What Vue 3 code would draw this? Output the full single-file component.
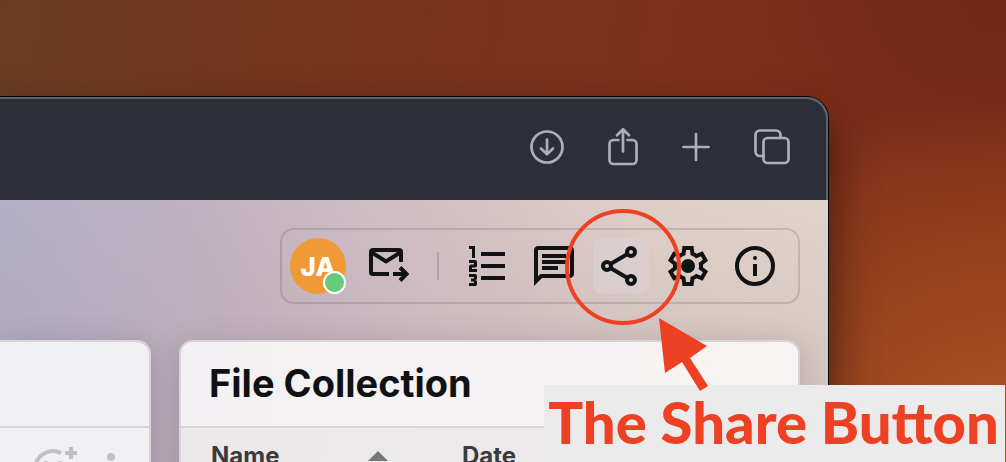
<script setup>
const columns = [
  { key: 'name', label: 'Name', sorted: true },
  { key: 'date', label: 'Date', sorted: false },
]
</script>

<template>
  <main class="desktop">
    <section class="window">
      <header class="titlebar">
        <button type="button" class="chrome" aria-label="Downloads">
          <svg width="34" height="40" viewBox="0 0 34 40">
            <circle cx="17" cy="20" r="15.5" />
            <path d="M17 12.5V27M11 21.5L17 27.3L23 21.5" />
          </svg>
        </button>
        <button type="button" class="chrome" aria-label="Share page">
          <svg width="30" height="40" viewBox="0 0 30 40">
            <path d="M10.500 13H5.500A4 4 0 0 0 1.500 17V33A4 4 0 0 0 5.500 37H24.500A4 4 0 0 0 28.500 33V17A4 4 0 0 0 24.500 13H19.500" />
            <path d="M15 24.500V2.500M9 8.300L15 2.300L21 8.300" />
          </svg>
        </button>
        <button type="button" class="chrome" aria-label="New tab">
          <svg width="28" height="40" viewBox="0 0 28 40">
            <path d="M14 7V33M1.500 20H26.500" />
          </svg>
        </button>
        <button type="button" class="chrome" aria-label="Tab overview">
          <svg width="36" height="40" viewBox="0 0 36 40">
            <rect x="9.500" y="11" width="25" height="25" rx="4" />
            <path d="M9.500 29H6A4.500 4.500 0 0 1 1.500 24.500V8A4.500 4.500 0 0 1 6 3.500H22A4.500 4.500 0 0 1 26.500 8V11" />
          </svg>
        </button>
      </header>

      <div class="content">
        <nav class="toolbar" aria-label="Board tools">
          <button type="button" class="avatar" aria-label="Account JA">
            JA<span class="presence"></span>
          </button>
          <button type="button" class="tool mail" aria-label="Invite">
            <svg width="56" height="56" viewBox="0 0 56 56" fill="none" stroke="currentColor" stroke-width="4">
              <path d="M28 36H12A2 2 0 0 1 10 34V14A2 2 0 0 1 12 12H38A2 2 0 0 1 40 14V24" />
              <path d="M10 14L25 23.500L40 14" />
              <path d="M32 36H45M39 29.500L45.500 36L39 42.500" />
            </svg>
          </button>
          <span class="divider"></span>
          <button type="button" class="tool" aria-label="Numbered list">
            <svg width="48" height="48" viewBox="0 0 24 24" fill="currentColor">
              <path d="M3 22v-1.500h2.500v-.75H4v-1.500h1.500v-.75H3V16h3q.425 0 .713.288T7 17v1q0 .425-.288.713T6 19q.425 0 .713.288T7 20v1q0 .425-.288.713T6 22H3Zm0-7v-2.750q0-.425.288-.713T4 11.250h1.500v-.75H3V9h3q.425 0 .713.288T7 10v1.750q0 .425-.288.713T6 12.750H4.500v.75H7V15H3Zm1.500-7V3.500H3V2h3v6H4.500ZM9 19v-2h12v2H9Zm0-6v-2h12v2H9Zm0-6V5h12v2H9Z" />
            </svg>
          </button>
          <button type="button" class="tool" aria-label="Comments">
            <svg width="48" height="48" viewBox="0 0 24 24" fill="currentColor">
              <path d="M4 4h16v12H5.170L4 17.170V4m0-2c-1.100 0-2 .9-2 2v18l4-4h14c1.100 0 2-.9 2-2V4c0-1.100-.9-2-2-2H4zm2 10h8v2H6v-2zm0-3h12v2H6V9zm0-3h12v2H6V6z" />
            </svg>
          </button>
          <button type="button" class="tool active" aria-label="Share">
            <svg width="56" height="56" viewBox="0 0 56 56" fill="none" stroke="currentColor" stroke-width="4">
              <circle cx="14" cy="28" r="4" />
              <circle cx="38" cy="14" r="4" />
              <circle cx="38" cy="42" r="4" />
              <path d="M17.500 26L34.500 16M17.500 30L34.500 40" />
            </svg>
          </button>
          <button type="button" class="tool" aria-label="Settings">
            <svg width="48" height="48" viewBox="0 0 24 24" fill="currentColor">
              <path fill-rule="evenodd" d="m9.250 22l-.4-3.200q-.325-.125-.612-.3t-.563-.375L4.700 19.375l-2.750-4.750l2.575-1.950Q4.500 12.500 4.500 12.338v-.675q0-.163.025-.338L1.950 9.375l2.750-4.750l2.975 1.250q.275-.2.575-.375t.6-.3l.4-3.200h5.500l.4 3.200q.325.125.613.3t.562.375l2.975-1.250l2.750 4.750l-2.575 1.950q.025.175.025.338v.674q0 .163-.05.338l2.575 1.950l-2.750 4.750l-2.950-1.250q-.275.2-.575.375t-.6.3l-.4 3.200h-5.500ZM11 20h1.975l.35-2.650q.775-.2 1.438-.588t1.212-.937l2.475 1.025l.975-1.700l-2.150-1.625q.125-.35.175-.737T17.500 12q0-.4-.05-.787t-.175-.738l2.150-1.625l-.975-1.700l-2.475 1.050q-.55-.575-1.212-.963t-1.438-.587L13 4h-1.975l-.35 2.650q-.775.2-1.437.588t-1.213.937L5.550 7.150l-.975 1.700l2.150 1.600q-.125.375-.175.75t-.05.8q0 .4.05.775t.175.75l-2.150 1.625l.975 1.700l2.475-1.050q.55.575 1.213.963t1.437.587L11 20Z" />
              <circle cx="12" cy="12" r="3.500" />
            </svg>
          </button>
          <button type="button" class="tool" aria-label="Info">
            <svg width="48" height="48" viewBox="0 0 24 24" fill="currentColor">
              <path d="M11 17h2v-6h-2v6z" />
              <circle cx="12" cy="8" r="1" />
              <circle cx="12" cy="12" r="9" fill="none" stroke="currentColor" stroke-width="2" />
            </svg>
          </button>
        </nav>

        <div class="cards">
          <article class="card side">
            <header class="card-head"></header>
            <div class="actions">
              <button type="button" class="tool" aria-label="Add reaction">
                <svg width="48" height="48" viewBox="0 0 24 24" fill="currentColor">
                  <path d="M16 3.950A9 9 0 1 0 20.500 9" fill="none" stroke="currentColor" stroke-width="2" />
                  <circle cx="8.500" cy="9.500" r="1.500" />
                  <circle cx="15.500" cy="9.500" r="1.500" />
                  <path d="M12 17.500c2.330 0 4.310-1.460 5.110-3.500H6.890c.8 2.040 2.780 3.500 5.110 3.500z" />
                  <path d="M20 1h2v2h2v2h-2v2h-2V5h-2V3h2z" />
                </svg>
              </button>
              <button type="button" class="tool" aria-label="More">
                <svg width="48" height="48" viewBox="0 0 24 24" fill="currentColor">
                  <circle cx="12" cy="6" r="2" />
                  <circle cx="12" cy="12" r="2" />
                  <circle cx="12" cy="18" r="2" />
                </svg>
              </button>
            </div>
          </article>

          <article class="card files">
            <header class="card-head"><h1>File Collection</h1></header>
            <table>
              <thead>
                <tr>
                  <th v-for="column in columns" :key="column.key" scope="col">
                    <span class="label">
                      {{ column.label }}
                      <svg v-if="column.sorted" width="20" height="10" viewBox="0 0 20 10"><path d="M0 10L10 0L20 10Z" fill="currentColor" /></svg>
                    </span>
                  </th>
                </tr>
              </thead>
            </table>
          </article>
        </div>
      </div>
    </section>

    <p class="caption">The Share Button</p>
    <svg class="pointer" width="152" height="190" viewBox="0 0 152 190" aria-hidden="true">
      <circle cx="63" cy="62" r="56" fill="none" stroke="#ee4023" stroke-width="4" />
      <path d="M99 113L147 141L130 153L148 181L140 186L122 157L105 168Z" fill="#ee4023" />
    </svg>
  </main>
</template>

<style>
body {
  margin: 0;
}
</style>

<style scoped>
* {
  box-sizing: border-box;
}

.desktop {
  position: relative;
  display: flex;
  height: 100vh;
  padding: 96px 177px 0 0;
  overflow: hidden;
  font-family: Inter, "Liberation Sans", sans-serif;
  background:
    radial-gradient(ellipse 420px 360px at 100% 100%, #b05a26 0%, #a85223cc 30%, #a8522300 100%),
    radial-gradient(ellipse 300px 240px at 100% 0%, #6c2417cc 0%, #6c241700 100%),
    linear-gradient(100deg, #6b3c24 0%, #74371c 25%, #80301a 65%, #863119 100%);
}

.window {
  position: relative;
  display: flex;
  flex: 1;
  flex-direction: column;
  min-width: 0;
  border: solid #08080a;
  border-width: 1px 1px 0 0;
  border-radius: 0 22px 0 0;
  box-shadow: 0 24px 44px 2px rgba(20, 8, 4, 0.6);
}

.titlebar {
  display: flex;
  flex: none;
  align-items: center;
  justify-content: flex-end;
  gap: 44px;
  height: 103px;
  padding: 0 38px 3px;
  background: #2c2f38;
  border-radius: 0 21px 0 0;
  box-shadow: inset -1px 1px 0 1px #5d616a;
  clip-path: inset(0);
}

button {
  padding: 0;
  border: 0;
  background: none;
  font: inherit;
  cursor: pointer;
}

button svg {
  display: block;
}

.chrome {
  color: #abaebb;
}

.chrome svg {
  fill: none;
  stroke: currentColor;
  stroke-width: 2.7;
  stroke-linecap: round;
  stroke-linejoin: round;
}

.content {
  display: flex;
  flex: 1;
  flex-direction: column;
  gap: 36px;
  padding-top: 28px;
  background:
    linear-gradient(180deg, #aa9ca800 0%, #a698a566 100%),
    linear-gradient(98deg, #b1aec5 0%, #c0b2c0 23%, #d3c0c4 50%, #dfcfc7 76%, #e2d5ca 100%);
}

.toolbar {
  display: flex;
  align-self: flex-end;
  align-items: center;
  gap: 11px;
  margin-right: 28px;
  padding: 8px 15px 8px 8px;
  border: 2px solid rgba(90, 70, 80, 0.2);
  border-radius: 14px;
}

.avatar {
  position: relative;
  width: 56px;
  height: 56px;
  border-radius: 50%;
  background: #f09a37;
  color: #fff;
  font-size: 26px;
  font-weight: 800;
}

.presence {
  position: absolute;
  right: 0;
  bottom: 0;
  width: 23px;
  height: 23px;
  border: 2px solid #fff;
  border-radius: 50%;
  background: #66c97b;
}

.tool {
  display: grid;
  flex: none;
  place-items: center;
  width: 56px;
  height: 56px;
  border-radius: 8px;
  color: #101213;
}

.mail {
  margin-left: 4px;
}

.active {
  background: rgba(219, 210, 211, 0.6);
}

.divider {
  width: 2px;
  height: 28px;
  margin: 0 9px;
  background: #aaa5a8;
}

.cards {
  display: grid;
  flex: 1;
  grid-template-columns: 151px minmax(0, 1fr);
  gap: 28px;
  padding-right: 28px;
}

.card {
  display: flex;
  flex-direction: column;
  border: 2px solid #d8d4d6;
  border-bottom: 0;
  border-radius: 14px 14px 0 0;
  background: #f1f0f3;
  background-clip: padding-box;
  box-shadow: 0 4px 28px rgba(90, 70, 90, 0.24);
}

.side {
  border-left: 0;
  border-top-left-radius: 0;
}

.files {
  background: linear-gradient(90deg, #f3f1f3, #f7f4f3);
}

.card-head {
  display: flex;
  flex: none;
  align-items: center;
  height: 86px;
  padding: 0 28px 3px;
  border-bottom: 2px solid #d7d5d8;
}

h1 {
  margin: 0;
  color: #101112;
  font-size: 38px;
  font-weight: 700;
  line-height: 48px;
  white-space: nowrap;
}

.actions {
  display: flex;
  justify-content: flex-end;
  gap: 2px;
  padding: 13px 10px 0;
}

.actions .tool {
  color: #c2c0c4;
}

table {
  width: 100%;
  table-layout: fixed;
  border-collapse: collapse;
  background: rgba(228, 227, 227, 0.6);
}

th {
  padding: 12px 0 12px 30px;
  color: #3b3b3c;
  font-size: 24px;
  font-weight: 700;
  line-height: 32px;
  text-align: left;
}

th:first-child {
  width: 251px;
}

.label {
  display: flex;
  align-items: center;
  justify-content: space-between;
  padding-right: 44px;
}

.label svg {
  color: #777677;
}

.caption {
  position: absolute;
  right: 1px;
  bottom: 0;
  margin: 0;
  padding: 5px 6px 8px 4px;
  background: #ebebeb;
  color: #ee4023;
  font-family: Lato, sans-serif;
  font-size: 58px;
  font-weight: 900;
  line-height: 64px;
  white-space: nowrap;
}

.pointer {
  position: absolute;
  top: 205px;
  right: 294px;
  pointer-events: none;
}
</style>
